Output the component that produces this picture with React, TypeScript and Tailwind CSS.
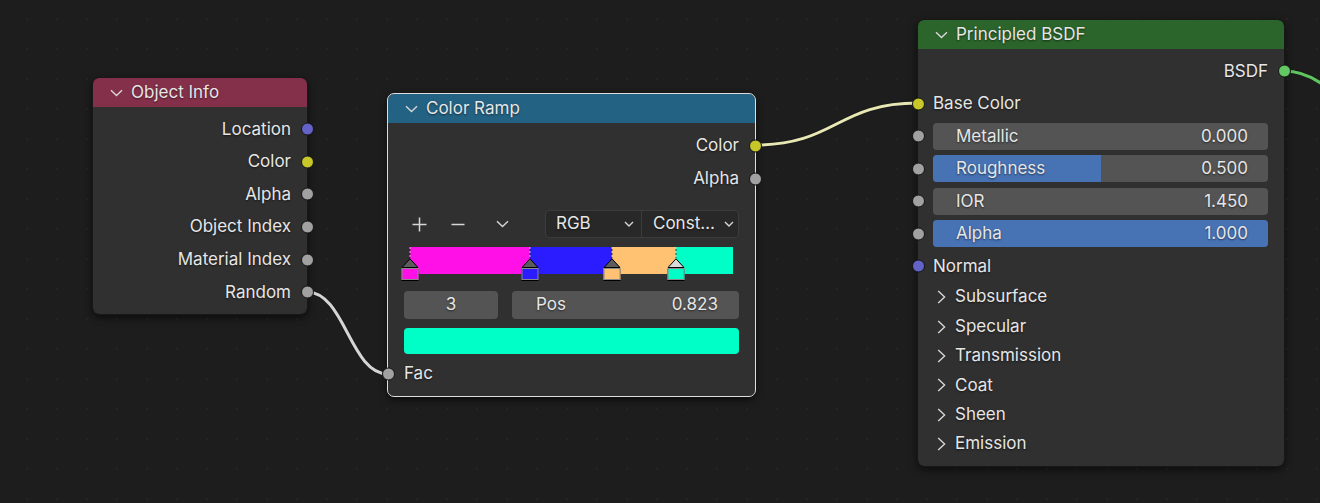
import React from "react";

const socketColor = {
  purple: "bg-[#6363c7]",
  yellow: "bg-[#c7c729]",
  grey: "bg-[#a1a1a1]",
  green: "bg-[#63c763]",
};

type SocketKind = keyof typeof socketColor;

function Socket({ side, kind }: { side: "left" | "right"; kind: SocketKind }) {
  return (
    <span
      className={`absolute top-1/2 h-[13px] w-[13px] -translate-y-1/2 rounded-full border border-[#141414] ${
        side === "right" ? "right-[-6.5px]" : "left-[-6.5px]"
      } ${socketColor[kind]}`}
    />
  );
}

function ChevronDown({ className = "" }: { className?: string }) {
  return (
    <svg width="13" height="8" viewBox="0 0 13 8" className={className}>
      <path d="M1 1.2 L6.5 6.6 L12 1.2" fill="none" stroke="#d6d6d6" strokeWidth="1.4" />
    </svg>
  );
}

function SmallChevron() {
  return (
    <svg width="10" height="6" viewBox="0 0 10 6">
      <path d="M1 1 L5 5 L9 1" fill="none" stroke="#d6d6d6" strokeWidth="1.4" />
    </svg>
  );
}

function ChevronRight() {
  return (
    <svg width="9" height="14" viewBox="0 0 9 14">
      <path d="M1.2 1 L7.6 7 L1.2 13" fill="none" stroke="#d6d6d6" strokeWidth="1.4" />
    </svg>
  );
}

function Header({ title, color }: { title: string; color: string }) {
  return (
    <div className={`flex h-[29px] items-center gap-[8px] rounded-t-[6px] pl-[17px] text-[#e6e6e6] ${color}`}>
      <ChevronDown />
      <span>{title}</span>
    </div>
  );
}

function OutRow({ label, kind, h = "h-[32.6px]" }: { label: string; kind: SocketKind; h?: string }) {
  return (
    <div className={`relative flex items-center justify-end pr-[16px] ${h}`}>
      <span>{label}</span>
      <Socket side="right" kind={kind} />
    </div>
  );
}

function ObjectInfo() {
  const rows: [string, SocketKind][] = [
    ["Location", "purple"],
    ["Color", "yellow"],
    ["Alpha", "grey"],
    ["Object Index", "grey"],
    ["Material Index", "grey"],
    ["Random", "grey"],
  ];
  return (
    <div className="absolute left-[93px] top-[78px] z-10 h-[236px] w-[214px] rounded-[6px] bg-[#303030] shadow-[0_3px_8px_rgba(0,0,0,0.7)] outline outline-1 outline-[#181818]">
      <Header title="Object Info" color="bg-[#85304a]" />
      <div className="flex flex-col pt-[6px]">
        {rows.map(([label, kind]) => (
          <OutRow key={label} label={label} kind={kind} />
        ))}
      </div>
    </div>
  );
}

const stops = [
  { pos: 0, color: "#ff10e6", active: false },
  { pos: 0.3715, color: "#2a1cff", active: false },
  { pos: 0.625, color: "#ffc273", active: false },
  { pos: 0.823, color: "#00ffc6", active: true },
];

function StopMarker({ pos, color, active }: { pos: number; color: string; active: boolean }) {
  return (
    <div
      className="absolute top-0 flex w-[17px] -translate-x-1/2 flex-col items-center"
      style={{ left: `${pos * 100}%` }}
    >
      <div className="h-[11px] w-px bg-[repeating-linear-gradient(to_bottom,#d0d0d0_0px,#d0d0d0_2px,#202020_2px,#202020_4px)] opacity-80" />
      <svg width="17" height="10" viewBox="0 0 17 10" className="block">
        <path
          d="M0.5 9.5 L8.5 0.8 L16.5 9.5 Z"
          fill={active ? "#d9d9d9" : "#5c5c5c"}
          stroke="#000000"
          strokeWidth="1"
        />
      </svg>
      <div
        className="h-[12px] w-[17px] border border-[#8a8a8a] shadow-[0_1px_0_#000]"
        style={{ backgroundColor: color }}
      />
    </div>
  );
}

function ColorRamp() {
  const segments = stops.map((s, i) => ({
    color: s.color,
    width: (i + 1 < stops.length ? stops[i + 1].pos : 1) - s.pos,
  }));
  return (
    <div className="absolute left-[388px] top-[94px] z-10 h-[302px] w-[367px] rounded-[6px] bg-[#303030] shadow-[0_3px_8px_rgba(0,0,0,0.7)] outline outline-1 outline-[#dedede]">
      <Header title="Color Ramp" color="bg-[#246283]" />
      <div className="flex flex-col pt-[6px]">
        <OutRow label="Color" kind="yellow" h="h-[33px]" />
        <OutRow label="Alpha" kind="grey" h="h-[33px]" />

        <div className="mt-[15px] flex h-[28px] items-center px-[16px]">
          <div className="flex w-[141px] items-center">
            <svg width="15" height="15" viewBox="0 0 15 15" className="ml-[8px]">
              <path d="M7.5 0.5 V14.5 M0.5 7.5 H14.5" stroke="#d6d6d6" strokeWidth="1.5" />
            </svg>
            <svg width="14" height="15" viewBox="0 0 14 15" className="ml-[24px]">
              <path d="M0.5 7.5 H13.5" stroke="#d6d6d6" strokeWidth="1.5" />
            </svg>
            <ChevronDown className="ml-[31px]" />
          </div>
          <div className="flex h-[28px] flex-1 rounded-[4px] border border-[#3c3c3c] bg-[#282828]">
            <div className="flex w-[96px] items-center justify-between border-r border-[#3c3c3c] pl-[10px] pr-[7px]">
              <span>RGB</span>
              <SmallChevron />
            </div>
            <div className="flex flex-1 items-center justify-between pl-[11px] pr-[4px]">
              <span>Const…</span>
              <SmallChevron />
            </div>
          </div>
        </div>

        <div className="mt-[9px] h-[44px] pl-[22px] pr-[22px]">
          <div className="relative h-[27px]">
            <div className="flex h-[27px]">
              {segments.map((s, i) => (
                <div key={i} className="h-full" style={{ width: `${s.width * 100}%`, backgroundColor: s.color }} />
              ))}
            </div>
            {stops.map((s, i) => (
              <StopMarker key={i} pos={s.pos} color={s.color} active={s.active} />
            ))}
          </div>
        </div>

        <div className="flex h-[28px] gap-[14px] px-[16px]">
          <div className="flex w-[94px] items-center justify-center rounded-[4px] bg-[#545454]">3</div>
          <div className="flex flex-1 items-center justify-between rounded-[4px] bg-[#545454] pl-[24px] pr-[21px]">
            <span>Pos</span>
            <span>0.823</span>
          </div>
        </div>

        <div className="mx-[16px] mt-[9px] h-[26px] rounded-[4px] bg-[#00ffc6]" />

        <div className="relative mt-[3.5px] flex h-[33px] items-center pl-[16px]">
          <Socket side="left" kind="grey" />
          <span>Fac</span>
        </div>
      </div>
    </div>
  );
}

function Field({ label, value, fill }: { label: string; value: string; fill: number }) {
  return (
    <div className="relative flex h-[32.5px] items-center pl-[15px] pr-[16px]">
      <Socket side="left" kind="grey" />
      <div className="relative flex h-[27px] flex-1 items-center justify-between overflow-hidden rounded-[4px] bg-[#545454] pl-[23px] pr-[20px]">
        <div className="absolute inset-y-0 left-0 bg-[#4772b3]" style={{ width: `${fill * 100}%` }} />
        <span className="relative">{label}</span>
        <span className="relative">{value}</span>
      </div>
    </div>
  );
}

function PrincipledBSDF() {
  const panels = ["Subsurface", "Specular", "Transmission", "Coat", "Sheen", "Emission"];
  return (
    <div className="absolute left-[918px] top-[20px] z-10 h-[446px] w-[366px] rounded-[6px] bg-[#303030] shadow-[0_3px_8px_rgba(0,0,0,0.7)] outline outline-1 outline-[#181818]">
      <Header title="Principled BSDF" color="bg-[#2b652b]" />
      <div className="flex flex-col pt-[6px]">
        <OutRow label="BSDF" kind="green" h="h-[32.5px]" />
        <div className="relative flex h-[32.5px] items-center pl-[15px]">
          <Socket side="left" kind="yellow" />
          <span>Base Color</span>
        </div>
        <Field label="Metallic" value="0.000" fill={0} />
        <Field label="Roughness" value="0.500" fill={0.5} />
        <Field label="IOR" value="1.450" fill={0} />
        <Field label="Alpha" value="1.000" fill={1} />
        <div className="relative flex h-[32.5px] items-center pl-[15px]">
          <Socket side="left" kind="purple" />
          <span>Normal</span>
        </div>
        {panels.map((p) => (
          <div key={p} className="flex h-[29.4px] items-center gap-[9px] pl-[19px]">
            <ChevronRight />
            <span>{p}</span>
          </div>
        ))}
      </div>
    </div>
  );
}

function Links() {
  return (
    <svg className="pointer-events-none absolute inset-0 z-0" width="1320" height="503" viewBox="0 0 1320 503">
      <g fill="none" strokeLinecap="round">
        <path d="M307 292 C345 292 350 374 388 374" stroke="#1a1a1a" strokeWidth="5" />
        <path d="M307 292 C345 292 350 374 388 374" stroke="#d4d4d4" strokeWidth="3" />
        <path d="M755 145 C836 145 837 103 918 103" stroke="#1a1a1a" strokeWidth="5" />
        <path d="M755 145 C836 145 837 103 918 103" stroke="#e8e8b4" strokeWidth="3" />
        <path d="M1284 71 C1330 71 1370 120 1420 260" stroke="#1a1a1a" strokeWidth="5" />
        <path d="M1284 71 C1330 71 1370 120 1420 260" stroke="#5fc35f" strokeWidth="3" />
      </g>
    </svg>
  );
}

export default function App() {
  return (
    <div className="relative h-[503px] w-[1320px] overflow-hidden bg-[#1d1d1d] bg-[radial-gradient(circle,#242424_1px,transparent_1.2px)] bg-[length:30px_30px] bg-[position:12px_4px] font-[Inter,'Noto_Sans',sans-serif] text-[17px] text-[#e6e6e6] [text-shadow:0_1px_2px_rgba(0,0,0,0.55)]">
      <Links />
      <ObjectInfo />
      <ColorRamp />
      <PrincipledBSDF />
    </div>
  );
}
